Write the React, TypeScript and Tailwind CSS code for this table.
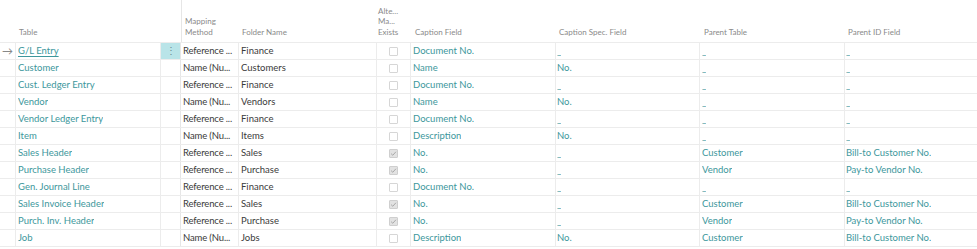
import React from 'react';

type Row = {
  table: string;
  method: string;
  folder: string;
  alt: boolean;
  caption: string;
  spec: string;
  parent: string;
  parentId: string;
};

const rows: Row[] = [
  { table: 'G/L Entry', method: 'Reference ...', folder: 'Finance', alt: false, caption: 'Document No.', spec: '_', parent: '_', parentId: '_' },
  { table: 'Customer', method: 'Name (Nu...', folder: 'Customers', alt: false, caption: 'Name', spec: 'No.', parent: '_', parentId: '_' },
  { table: 'Cust. Ledger Entry', method: 'Reference ...', folder: 'Finance', alt: false, caption: 'Document No.', spec: '_', parent: '_', parentId: '_' },
  { table: 'Vendor', method: 'Name (Nu...', folder: 'Vendors', alt: false, caption: 'Name', spec: 'No.', parent: '_', parentId: '_' },
  { table: 'Vendor Ledger Entry', method: 'Reference ...', folder: 'Finance', alt: false, caption: 'Document No.', spec: '_', parent: '_', parentId: '_' },
  { table: 'Item', method: 'Name (Nu...', folder: 'Items', alt: false, caption: 'Description', spec: 'No.', parent: '_', parentId: '_' },
  { table: 'Sales Header', method: 'Reference ...', folder: 'Sales', alt: true, caption: 'No.', spec: '_', parent: 'Customer', parentId: 'Bill-to Customer No.' },
  { table: 'Purchase Header', method: 'Reference ...', folder: 'Purchase', alt: true, caption: 'No.', spec: '_', parent: 'Vendor', parentId: 'Pay-to Vendor No.' },
  { table: 'Gen. Journal Line', method: 'Reference ...', folder: 'Finance', alt: false, caption: 'Document No.', spec: '_', parent: '_', parentId: '_' },
  { table: 'Sales Invoice Header', method: 'Reference ...', folder: 'Sales', alt: true, caption: 'No.', spec: '_', parent: 'Customer', parentId: 'Bill-to Customer No.' },
  { table: 'Purch. Inv. Header', method: 'Reference ...', folder: 'Purchase', alt: true, caption: 'No.', spec: '_', parent: 'Vendor', parentId: 'Pay-to Vendor No.' },
  { table: 'Job', method: 'Name (Nu...', folder: 'Jobs', alt: false, caption: 'Description', spec: 'No.', parent: 'Customer', parentId: 'Bill-to Customer No.' },
];

const cols = 'grid grid-cols-[16px_145px_20px_58px_138px_34px_145px_144px_145px_127px]';

function Check({ on }: { on: boolean }) {
  return (
    <span
      className={`flex h-[9px] w-[9px] items-center justify-center rounded-[1px] border ${
        on ? 'border-[#cfcfcf] bg-[#e2e2e2]' : 'border-[#d6d6d6] bg-white'
      }`}
    >
      {on && (
        <svg viewBox="0 0 10 10" className="h-[7px] w-[7px]">
          <path d="M1.5 5.2 L4 7.5 L8.5 2.5" fill="none" stroke="#a8a8a8" strokeWidth="1.4" />
        </svg>
      )}
    </span>
  );
}

function Link({ v, className = '' }: { v: string; className?: string }) {
  return <span className={`truncate text-[#3d979c] ${className}`}>{v}</span>;
}

export default function App() {
  return (
    <div className="h-[249px] w-[977px] overflow-hidden bg-white font-['Lato','Open_Sans',sans-serif] text-[9.5px]">
      {/* header */}
      <div className={`${cols} h-[43px] border-b border-[#ececec] text-[8px] leading-[10.5px] text-[#8a8a8a]`}>
        <div />
        <div className="flex items-end pb-[5px] pl-[3px]">Table</div>
        <div />
        <div className="flex items-end border-l border-[#e6e6e6] pb-[5px] pl-[3px]">
          <span>Mapping<br />Method</span>
        </div>
        <div className="flex items-end pb-[5px] pl-[3px]">Folder Name</div>
        <div className="flex items-end pb-[5px] pl-[1px]">
          <span>Alte...<br />Ma...<br />Exists</span>
        </div>
        <div className="flex items-end pb-[5px] pl-[4px]">Caption Field</div>
        <div className="flex items-end pb-[5px] pl-[3px]">Caption Spec. Field</div>
        <div className="flex items-end pb-[5px] pl-[4px]">Parent Table</div>
        <div className="flex items-end pb-[5px] pl-[3px]">Parent ID Field</div>
      </div>

      {rows.map((r, i) => (
        <div key={r.table} className={`${cols} h-[17px] border-b border-[#ececec] leading-[16px] text-[#3a3a3a]`}>
          <div className="flex items-center justify-center border-r border-[#ececec] text-[11px] text-[#888]">
            {i === 0 ? '→' : ''}
          </div>
          <div className="flex items-center border-r border-[#ececec] pl-[2px]">
            <Link v={r.table} className={i === 0 ? 'text-[#2f7f85] underline underline-offset-2' : ''} />
          </div>
          <div
            className={`flex items-center justify-center border-r border-[#e6e6e6] ${
              i === 0 ? 'bg-[#b9e4e8] text-[#6b8d90]' : ''
            }`}
          >
            {i === 0 ? '⋮' : ''}
          </div>
          <div className="overflow-hidden whitespace-nowrap border-r border-[#ececec] pl-[2px] tracking-[-0.15px]">
            {r.method}
          </div>
          <div className="truncate border-r border-[#ececec] pl-[2px]">{r.folder}</div>
          <div className="flex items-center justify-center border-r border-[#ececec]">
            <Check on={r.alt} />
          </div>
          <div className="flex items-center border-r border-[#ececec] pl-[2px]">
            <Link v={r.caption} />
          </div>
          <div className="flex items-center border-r border-[#ececec] pl-[1px]">
            <Link v={r.spec} />
          </div>
          <div className="flex items-center border-r border-[#ececec] pl-[2px]">
            <Link v={r.parent} />
          </div>
          <div className="flex items-center pl-[1px]">
            <Link v={r.parentId} />
          </div>
        </div>
      ))}
    </div>
  );
}
